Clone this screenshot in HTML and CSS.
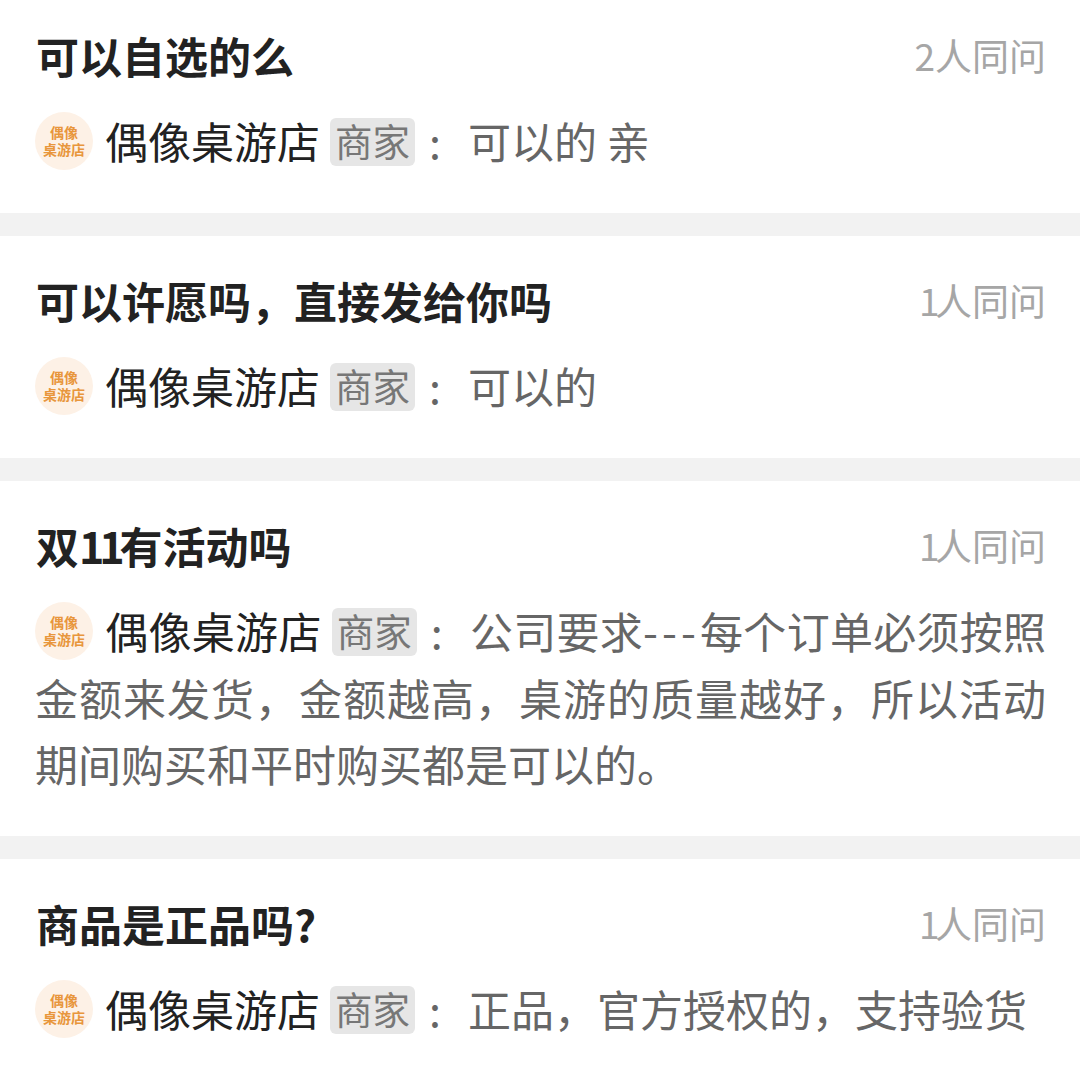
FILE: index.html
```html
<!DOCTYPE html>
<html lang="zh-CN">
<head>
    <meta charset="UTF-8">
    <title>问大家</title>
    <link rel="stylesheet" href="styles.css">
</head>
<body>
    <div class="qa-list">
        <section class="qa">
            <div class="qa-head">
                <h2 class="question">可以自选的么</h2>
                <span class="asked">2人同问</span>
            </div>
            <p class="answer"><span class="avatar"><span>偶像</span><span>桌游店</span></span><span class="shop">偶像桌游店</span><span class="tag">商家</span><span class="colon">:</span>可以的 亲</p>
        </section>
        <section class="qa">
            <div class="qa-head">
                <h2 class="question">可以许愿吗，直接发给你吗</h2>
                <span class="asked"><span class="num">1</span>人同问</span>
            </div>
            <p class="answer"><span class="avatar"><span>偶像</span><span>桌游店</span></span><span class="shop">偶像桌游店</span><span class="tag">商家</span><span class="colon">:</span>可以的</p>
        </section>
        <section class="qa">
            <div class="qa-head">
                <h2 class="question">双<span class="num">11</span>有活动吗</h2>
                <span class="asked"><span class="num">1</span>人同问</span>
            </div>
            <p class="answer"><span class="avatar"><span>偶像</span><span>桌游店</span></span><span class="shop">偶像桌游店</span><span class="tag">商家</span><span class="colon">:</span>公司要求<span class="dashes">---</span>每个订单必须按照金额来发货，金额越高，桌游的质量越好，所以活动期间购买和平时购买都是可以的。</p>
        </section>
        <section class="qa">
            <div class="qa-head">
                <h2 class="question">商品是正品吗?</h2>
                <span class="asked"><span class="num">1</span>人同问</span>
            </div>
            <p class="answer"><span class="avatar"><span>偶像</span><span>桌游店</span></span><span class="shop">偶像桌游店</span><span class="tag">商家</span><span class="colon">:</span>正品，官方授权的，支持验货</p>
        </section>
    </div>
</body>
</html>
```

FILE: styles.css
```css
body {
    margin: 0;
    background: #fff;
    font-family: "Noto Sans CJK SC", "Noto Sans", sans-serif;
    height: 1080px;
    overflow: hidden;
}

.qa-list {
    display: flex;
    flex-direction: column;
    gap: 23px;
    background: #f2f2f2;
}

.qa {
    background: #fff;
    padding: 40px 34px 39.5px 36px;
}

.qa:first-child {
    padding-top: 31px;
}

.qa-head {
    display: flex;
    justify-content: space-between;
    align-items: center;
    height: 48px;
    margin-bottom: 28px;
}

.question {
    margin: 0;
    font-size: 43px;
    line-height: 42px;
    font-weight: 700;
    color: #222;
}

.asked {
    font-size: 37px;
    line-height: 46px;
    color: #a6a6a6;
}

/* digits are narrower in the original font */
.num {
    letter-spacing: -0.12em;
}

.answer {
    margin: 0 0 0 -1px;
    font-size: 43px;
    line-height: 66.5px;
    color: #666;
    text-align: justify;
}

/* avatar stands in for the shop's round logo */
.avatar {
    display: inline-flex;
    flex-direction: column;
    align-items: center;
    justify-content: center;
    width: 58px;
    height: 58px;
    margin: -20px 12px -8px 0;
    border-radius: 50%;
    background: #fdf1e6;
    color: #e8963c;
    font-size: 14px;
    line-height: 17px;
    font-weight: 700;
    vertical-align: middle;
}

.shop {
    color: #222;
}

.tag {
    display: inline-block;
    height: 48px;
    padding: 0 5px;
    margin: -10px 0 0 10px;
    border-radius: 6px;
    background: #e6e6e6;
    color: #777;
    font-size: 37.5px;
    line-height: 44px;
    vertical-align: middle;
}

.colon {
    display: inline-block;
    width: 40px;
    padding-right: 13px;
    text-align: center;
}

.dashes {
    letter-spacing: 4px;
}
```
